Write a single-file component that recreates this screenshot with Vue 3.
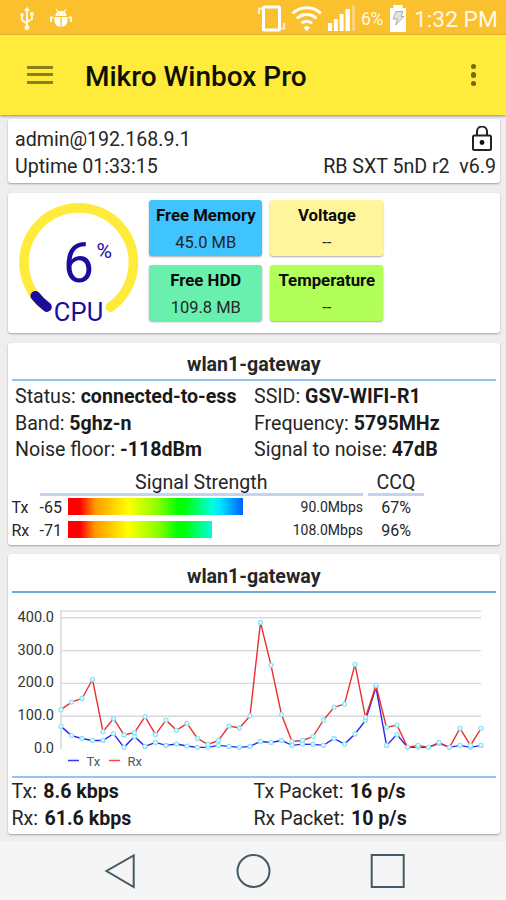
<template>
  <div class="screen">
    <header class="status-bar">
      <svg class="status-left" width="80" height="35" viewBox="0 0 80 35" fill="none" stroke="#fff7e6">
        <path d="M27 10V28M22 15v5l5 4M32 14v5l-5 3" stroke-width="2" />
        <path d="M23.800 11l3.200-4.300 3.200 4.300z" fill="#fff7e6" stroke="none" />
        <circle cx="27" cy="27.500" r="2.500" fill="#fff7e6" stroke="none" />
        <circle cx="22" cy="15" r="1.900" fill="#fff7e6" stroke="none" />
        <path d="M30.200 12.300h3.500v3.500h-3.500z" fill="#fff7e6" stroke="none" />
        <path d="M55.500 16c0-3.500 2-5 5.500-5s5.500 1.500 5.500 5z" fill="#fff" stroke="none" />
        <path d="M56 9l2 3M66 9l-2 3" stroke-width="1.200" />
        <path d="M54.500 17H60.400V26.800C56.500 26.500 54.500 24 54.500 20zM61.600 17H67.500V20C67.500 24 65.500 26.500 61.600 26.800z" fill="#fff" stroke="none" />
        <path d="M53.500 17.500H51v4.500M68.500 17.500H71v4.500" stroke-width="2" />
        <path d="M58.500 14h.8M62.700 14h.8" stroke="#fbc02d" stroke-width="1.200" />
      </svg>
      <svg class="status-right" width="98" height="35" viewBox="257 0 98 35" fill="none" stroke="#fff">
        <rect x="263.500" y="7" width="16" height="23" rx="1" stroke-width="3" />
        <path d="M259 14V8.500h3M284 23v5.500h-3" stroke="#fff0cc" stroke-width="2.200" />
        <path d="M292.500 13.500a20.500 20.500 0 0 1 28.500 0M297 18.500a14 14 0 0 1 19.500 0M301.500 23.300a7.500 7.500 0 0 1 10.500 0" stroke-width="3" />
        <path d="M303.800 27.500l3 4 3-4a4 4 0 0 0-6 0z" fill="#fff" stroke="none" />
        <path d="M328 23h4v8h-4zM333.800 19h4v12h-4zM339.600 14h4v17h-4zM345.400 9h4.500v22h-4.500z" fill="#fff" stroke="none" />
        <path d="M352 5h3v26h-3z" fill="#fcd27a" stroke="none" />
      </svg>
      <span class="percent">6%</span>
      <svg class="battery" width="18" height="28" viewBox="0 0 18 28">
        <path d="M1 4h3.500V1h9v3H17v24H1z" fill="#fff" />
        <path d="M7 7.500h7l-2 5h3L6.500 21l2-6H4z" fill="#e4e4e0" stroke="#a7a79f" stroke-width=".9" />
      </svg>
      <span class="clock">1:32 PM</span>
    </header>

    <div class="toolbar">
      <div class="menu"><i></i><i></i><i></i></div>
      <h1>Mikro Winbox Pro</h1>
      <div class="more"><i></i><i></i><i></i></div>
    </div>

    <main>
      <section class="card device">
        <div class="line">
          <span class="address">admin@192.168.9.1</span>
          <svg class="lock" width="22" height="27" viewBox="0 0 22 27" fill="none" stroke="#222">
            <rect x="2" y="9.500" width="18" height="14.500" rx="1.500" stroke-width="2" />
            <path d="M6 9V5.500a5 5 0 0 1 10 0V9" stroke-width="2" />
            <circle cx="11" cy="16.500" r="2.400" fill="#111" stroke="none" />
          </svg>
        </div>
        <div class="line">
          <span class="uptime">Uptime 01:33:15</span>
          <span class="board">RB SXT 5nD r2&nbsp; v6.9</span>
        </div>
      </section>

      <section class="card resources">
        <svg class="gauge" width="128" height="128" viewBox="0 0 128 128">
          <path :d="gaugeTrack" fill="none" stroke="#ffeb3b" stroke-width="9.700" stroke-linecap="round" />
          <path :d="gaugeValue" fill="none" stroke="#1a0c9c" stroke-width="9.700" stroke-linecap="round" />
          <text x="63.500" y="82" font-size="56" text-anchor="middle" textLength="31" lengthAdjust="spacingAndGlyphs">6</text>
          <text x="81.500" y="57.500" font-size="20" textLength="15.500" lengthAdjust="spacingAndGlyphs">%</text>
          <text x="63.500" y="120.500" font-size="25.500" text-anchor="middle" textLength="49.500">CPU</text>
        </svg>
        <div class="tiles">
          <div v-for="tile in tiles" :key="tile.label" class="tile" :class="tile.kind">
            <b>{{ tile.label }}</b>
            <span>{{ tile.value }}</span>
          </div>
        </div>
      </section>

      <section class="card wireless">
        <h2>wlan1-gateway</h2>
        <div class="facts">
          <div v-for="fact in facts" :key="fact.label" :class="fact.kind">
            {{ fact.label }}: <b>{{ fact.value }}</b>
          </div>
        </div>
        <div class="signal">
          <div class="heading strength">Signal Strength</div>
          <div class="heading ccq">CCQ</div>
          <template v-for="row in signals" :key="row.name">
            <span class="name">{{ row.name }}</span>
            <span class="level">{{ row.level }}</span>
            <div class="meter">
              <div class="spectrum" :style="{ width: row.width + 'px' }"></div>
            </div>
            <span class="rate">{{ row.rate }}</span>
            <span class="quality">{{ row.ccq }}</span>
          </template>
        </div>
      </section>

      <section class="card traffic">
        <h2>wlan1-gateway</h2>
        <svg class="chart" width="486" height="183" viewBox="0 0 486 183">
          <path d="M48.500 18H469" stroke="#dedede" stroke-width="1.400" />
          <path d="M49 17.500V156" stroke="#d4d4d4" stroke-width="1.400" />
          <g v-for="tick in [400, 300, 200, 100, 0]" :key="tick">
            <path v-if="tick" :d="`M49 ${yOf(tick)}H469`" stroke="#d8d8d8" stroke-width="1.400" />
            <text class="axis" x="42" :y="yOf(tick) + 4" text-anchor="end">{{ tick }}.0</text>
          </g>
          <g v-for="line in series" :key="line.name">
            <polyline :points="toPoints(line.data)" fill="none" :stroke="line.color" stroke-width="1.400" />
            <circle
              v-for="(value, i) in line.data"
              :key="i"
              :cx="xOf(i)"
              :cy="yOf(value)"
              r="2"
              fill="#effcff"
              stroke="#8de3f5"
              stroke-width="1.300"
            />
          </g>
          <path d="M56 167.500h11" stroke="#3a33ff" stroke-width="1.500" />
          <text class="legend" x="74.500" y="172.500">Tx</text>
          <path d="M97 167.500h11" stroke="#f44" stroke-width="1.500" />
          <text class="legend" x="115.500" y="172.500">Rx</text>
        </svg>
        <div class="totals">
          <div v-for="total in totals" :key="total.label">
            {{ total.label }}: <b>{{ total.value }}</b>
          </div>
        </div>
      </section>
    </main>

    <nav class="nav-bar">
      <svg width="506" height="59" viewBox="0 0 506 59" fill="none" stroke="#455a64" stroke-width="2">
        <path d="M133.700 14.500v31.500L106.500 30z" />
        <circle cx="253.500" cy="30" r="16" />
        <rect x="371.700" y="14" width="32" height="32" />
      </svg>
    </nav>
  </div>
</template>

<script setup>
import { ref } from 'vue'

const tiles = ref([
  { label: 'Free Memory', value: '45.0 MB', kind: 'memory' },
  { label: 'Voltage', value: '--', kind: 'voltage' },
  { label: 'Free HDD', value: '109.8 MB', kind: 'hdd' },
  { label: 'Temperature', value: '--', kind: 'temperature' }
])

const facts = ref([
  { label: 'Status', value: 'connected-to-ess', kind: 'status' },
  { label: 'SSID', value: 'GSV-WIFI-R1', kind: 'ssid' },
  { label: 'Band', value: '5ghz-n', kind: 'band' },
  { label: 'Frequency', value: '5795MHz', kind: 'frequency' },
  { label: 'Noise floor', value: '-118dBm', kind: 'noise' },
  { label: 'Signal to noise', value: '47dB', kind: 'snr' }
])

const signals = ref([
  { name: 'Tx', level: -65, width: 175, rate: '90.0Mbps', ccq: '67%' },
  { name: 'Rx', level: -71, width: 144, rate: '108.0Mbps', ccq: '96%' }
])

const totals = ref([
  { label: 'Tx', value: '8.6 kbps' },
  { label: 'Tx Packet', value: '16 p/s' },
  { label: 'Rx', value: '61.6 kbps' },
  { label: 'Rx Packet', value: '10 p/s' }
])

const series = ref([
  {
    name: 'Tx',
    color: '#2a22f5',
    data: [69, 41, 32, 26, 26, 47, 5, 38, 8, 20, 11, 15, 9, 5, 5, 11, 8, 5, 8, 23, 20, 26, 11, 15, 14, 11, 32, 15, 46, 87, 188, 11, 44, 5, 5, 5, 17, 5, 11, 5, 11]
  },
  {
    name: 'Rx',
    color: '#ee2c2c',
    data: [120, 143, 154, 212, 53, 93, 43, 50, 99, 44, 88, 57, 78, 32, 14, 26, 70, 64, 101, 386, 255, 105, 23, 26, 38, 88, 127, 137, 258, 96, 194, 66, 73, 5, 11, 5, 20, 5, 63, 11, 63]
  }
])

const xOf = (i) => 49 + i * 10.5
const yOf = (value) => 156 - value * 0.328
const toPoints = (data) => data.map((value, i) => `${xOf(i)},${yOf(value)}`).join(' ')

// Angles run clockwise from the top of the dial
const arc = (from, to) => {
  const point = (deg) => {
    const rad = (deg * Math.PI) / 180
    return `${63.7 + 54.7 * Math.sin(rad)} ${62.5 - 54.7 * Math.cos(rad)}`
  }
  return `M${point(from)}A54.7 54.7 0 ${to - from > 180 ? 1 : 0} 1 ${point(to)}`
}

const gaugeTrack = arc(-144.5, 144.5)
const gaugeValue = arc(-144.5, -127.5)
</script>

<style>
body {
  margin: 0;
}
</style>

<style scoped>
.screen {
  width: 506px;
  height: 900px;
  display: flex;
  flex-direction: column;
  overflow: hidden;
  background: #eee;
  color: #262626;
  font-family: Roboto, sans-serif;
  font-size: 19.600px;
}

svg {
  display: block;
  flex: none;
}

.status-bar {
  height: 35px;
  flex: none;
  display: flex;
  align-items: center;
  background: #fbc02d;
  color: #fff9e9;
  white-space: nowrap;
}

.status-right {
  margin-left: 177px;
}

.percent {
  width: 24px;
  margin-left: 6px;
  padding-top: 2px;
  font-size: 17.500px;
  letter-spacing: -0.3px;
}

.battery {
  margin: 0 0 0 4px;
}

.clock {
  margin-left: 7px;
  padding-top: 3px;
  font-size: 22.800px;
}

.toolbar {
  height: 79.5px;
  flex: none;
  display: flex;
  align-items: center;
  background: #ffeb3b;
  box-shadow: 0 1px 3px rgba(0, 0, 0, 0.45);
  z-index: 1;
}

.menu {
  width: 26.500px;
  margin-left: 26.500px;
  display: grid;
  gap: 4.500px;
}

.menu i {
  height: 3px;
  background: #8c801b;
}

h1 {
  flex: 1;
  margin: 3px 0 0 32px;
  font-size: 28px;
  font-weight: 500;
  color: #101000;
}

.more {
  display: grid;
  gap: 3px;
  margin-right: 30px;
}

.more i {
  width: 5.500px;
  height: 5.500px;
  border-radius: 50%;
  background: #736914;
}

main {
  flex: 1;
  padding: 4.500px 6px 0 7.500px;
}

.card {
  box-sizing: border-box;
  background: #fff;
  border-radius: 3px;
  box-shadow: 0 1px 2px rgba(0, 0, 0, 0.33);
}

.device {
  height: 64px;
  padding: 6.800px 4px 0 7.500px;
}

.line {
  height: 27px;
  display: flex;
  justify-content: space-between;
  align-items: center;
}

.lock {
  margin-right: 3px;
}

.resources {
  height: 140.500px;
  margin-top: 9.500px;
  padding: 7px 0 0 7.500px;
  display: flex;
}

.gauge text {
  fill: #1a0c9c;
}

.tiles {
  display: grid;
  grid-template-columns: 113px 113px;
  grid-auto-rows: 56px;
  gap: 9px 8px;
  margin-left: 6.300px;
}

.tile {
  display: flex;
  flex-direction: column;
  align-items: center;
  padding-top: 1px;
  border-radius: 3px;
  box-sizing: border-box;
  box-shadow: 0 1px 2px rgba(0, 0, 0, 0.35);
  font-size: 16.800px;
  line-height: 28px;
  white-space: nowrap;
}

.tile span {
  font-size: 16.500px;
}

.tile b {
  font-weight: 700;
  color: #0c0c0c;
}

.memory {
  background: #40c4ff;
}

.voltage {
  background: #fff59d;
}

.hdd {
  background: #69f0ae;
}

.temperature {
  background: #b2ff59;
}

h2 {
  height: 37px;
  margin: 0;
  box-sizing: border-box;
  padding-top: 8px;
  border-bottom: 2px solid #90bff0;
  font-size: 19.600px;
  line-height: 26px;
  font-weight: 700;
  text-align: center;
}

b {
  font-weight: 700;
  color: #1a1a1a;
}

.wireless {
  height: 202px;
  margin-top: 10px;
  padding: 1px 4px 0;
}

.facts {
  display: grid;
  grid-template-columns: 239px 1fr;
  padding: 3px 0 0 3.500px;
  line-height: 26.700px;
  white-space: nowrap;
}

.signal {
  display: grid;
  grid-template-columns: 28px 28.500px 202px 93px 5px 56px;
  grid-template-rows: 31.500px 23px 23px;
  align-items: center;
  font-size: 16px;
}

.heading {
  align-self: end;
  height: 23px;
  border-bottom: 3px solid #c3d3f0;
  font-size: 19.600px;
  line-height: 25px;
  text-align: center;
}

.strength {
  grid-column: 2 / 5;
}

.ccq {
  grid-column: 6;
}

.name {
  grid-column: 1;
}

.quality {
  grid-column: 6;
  text-align: center;
}

.spectrum {
  height: 16.500px;
  margin-top: -1px;
  background: linear-gradient(90deg, #f00 0, #f00 12px, #ff9800 27px, #ff0 60px, #8f0 90px, #0f0 110px, #0f0 116px, #00ffe0 144px, #00e0ff 153px, #0060ff 175px) no-repeat 0 0 / 175px 100%;
}

.rate {
  font-size: 14px;
  text-align: right;
}

.traffic {
  height: 280px;
  margin-top: 9px;
  padding: 1px 4px 0;
}

.traffic h2 {
  height: 38.300px;
  padding-top: 9px;
  border-color: #6cabdd;
}

.axis {
  font-size: 14.500px;
  fill: #333;
}

.legend {
  font-size: 13px;
  fill: #555;
}

.totals {
  display: grid;
  grid-template-columns: 242px 1fr;
  border-top: 2px solid #94c3f2;
  padding-top: 1px;
  line-height: 26.700px;
  white-space: nowrap;
}

.totals b {
  margin-left: 1.500px;
}

.nav-bar {
  height: 59px;
  flex: none;
  background: #f5f5f5;
}
</style>
